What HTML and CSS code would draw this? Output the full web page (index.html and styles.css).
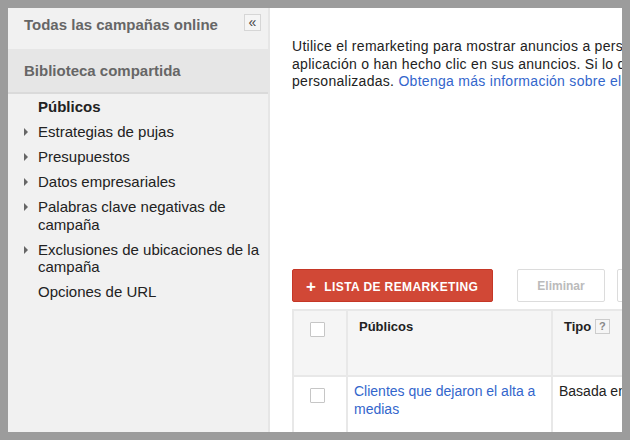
FILE: index.html
```html
<!DOCTYPE html>
<html lang="es">
<head>
    <meta charset="UTF-8" />
    <title>Biblioteca compartida - Públicos</title>
    <link rel="stylesheet" href="styles.css">
</head>
<body>
    <div class="frame">
        <div class="sidebar">
            <div class="side-top">
                <span class="side-title">Todas las campañas online</span>
                <button class="collapse-btn">&laquo;</button>
            </div>
            <div class="side-section">Biblioteca compartida</div>
            <ul class="side-list">
                <li class="active">Públicos</li>
                <li class="expand">Estrategias de pujas</li>
                <li class="expand">Presupuestos</li>
                <li class="expand">Datos empresariales</li>
                <li class="expand">Palabras clave negativas de campaña</li>
                <li class="expand">Exclusiones de ubicaciones de la campaña</li>
                <li>Opciones de URL</li>
            </ul>
        </div>

        <div class="main">
            <p class="intro">Utilice el remarketing para mostrar anuncios a personas que han visitado su sitio web o su<br>
                aplicación o han hecho clic en sus anuncios. Si lo desea, también puede usar listas de audiencias<br>
                personalizadas. <a href="#">Obtenga más información sobre el remarketing</a></p>

            <div class="toolbar">
                <button class="btn-red"><span class="plus">+</span>LISTA DE REMARKETING</button>
                <span class="divider"></span>
                <button class="btn-plain" disabled>Eliminar</button>
                <button class="btn-plain">Más</button>
            </div>

            <table class="grid">
                <thead>
                    <tr>
                        <th class="col-check"><span class="checkbox"></span></th>
                        <th class="col-name">Públicos</th>
                        <th class="col-type">Tipo <span class="help">?</span></th>
                    </tr>
                </thead>
                <tbody>
                    <tr>
                        <td class="col-check"><span class="checkbox"></span></td>
                        <td class="col-name"><a href="#">Clientes que dejaron el alta a medias</a></td>
                        <td class="col-type">Basada en reglas</td>
                    </tr>
                </tbody>
            </table>
        </div>
    </div>
</body>
</html>
```

FILE: styles.css
```css
* {
    box-sizing: border-box;
}

body {
    margin: 0;
    background: #9c9c9c;
    font-family: "Liberation Sans", Arial, sans-serif;
    color: #222;
}

.frame {
    margin: 8px;
    width: 614px;
    height: 424px;
    background: #fff;
    display: flex;
    overflow: hidden;
}

.sidebar {
    width: 262px;
    flex-shrink: 0;
    background: #f1f1f1;
    border-right: 2px solid #e6e6e6;
}

.side-top {
    height: 41px;
    display: flex;
    align-items: center;
    justify-content: space-between;
    padding: 0 7px 0 16px;
}

.side-title {
    font-size: 15px;
    font-weight: bold;
    color: #666;
    margin-top: -8px;
}

.collapse-btn {
    width: 17px;
    height: 17px;
    padding: 0;
    margin-top: -13px;
    border: 1px solid #d6d6d6;
    background: #f5f5f5;
    color: #444;
    font-size: 14px;
    line-height: 13px;
    font-family: "Liberation Sans", Arial, sans-serif;
}

.side-section {
    height: 45px;
    background: #e6e6e6;
    border-bottom: 2px solid #dadada;
    padding-left: 16px;
    display: flex;
    align-items: center;
    font-size: 15px;
    font-weight: bold;
    color: #666;
}

.side-list {
    list-style: none;
    margin: 0;
    padding: 4px 4px 0 30px;
    font-size: 15px;
    line-height: 17.5px;
}

.side-list li {
    position: relative;
    margin-bottom: 7.5px;
}

.side-list li.active {
    font-weight: bold;
}

.side-list li.expand::before {
    content: "";
    position: absolute;
    left: -14px;
    top: 5px;
    border-left: 4px solid #666;
    border-top: 4px solid transparent;
    border-bottom: 4px solid transparent;
}

.main {
    flex: 1;
    padding: 30px 0 0 22px;
    min-width: 0;
}

.intro {
    margin: 0;
    white-space: nowrap;
    font-size: 14px;
    letter-spacing: 0.28px;
    line-height: 17.5px;
    height: 231px;
}

.intro a,
.grid a {
    color: #3366cc;
    text-decoration: none;
}

.toolbar {
    display: flex;
    align-items: center;
    gap: 12px;
    height: 33px;
    white-space: nowrap;
}

.btn-red {
    height: 33px;
    width: 201px;
    background: #d14836;
    border: 1px solid #c53727;
    border-radius: 2px;
    color: #fff;
    font-family: "Liberation Sans", Arial, sans-serif;
    font-size: 12px;
    letter-spacing: 0.4px;
    font-weight: bold;
    padding: 0 0 0 13px;
    text-align: left;
    flex-shrink: 0;
}

.plus {
    font-size: 17px;
    margin-right: 8px;
    position: relative;
    top: 1px;
}

.divider {
    width: 1px;
    height: 32px;
    background: #ddd;
}

.btn-plain {
    height: 33px;
    width: 88px;
    background: #fff;
    border: 1px solid #dcdcdc;
    border-radius: 2px;
    color: #bbb;
    font-family: "Liberation Sans", Arial, sans-serif;
    font-size: 12px;
    font-weight: bold;
    flex-shrink: 0;
}

.grid {
    margin-top: 7px;
    border-collapse: collapse;
    width: 560px;
    font-size: 14px;
}

.grid th,
.grid td {
    border: 2px solid #e8e8e8;
    text-align: left;
    vertical-align: top;
}

.grid thead tr {
    background: #f5f5f5;
    height: 66px;
}

.grid th {
    font-size: 13px;
    font-weight: bold;
    padding: 8px 10px 0 11px;
}

.grid td {
    padding: 6px 8px 0 6px;
    line-height: 17.5px;
    height: 60px;
}

.col-check {
    width: 54px;
}

.grid .col-check {
    padding: 11px 0 0 16px;
}

.col-name {
    width: 205px;
}

.checkbox {
    display: block;
    width: 15px;
    height: 15px;
    border: 1px solid #c6c6c6;
    background: #fff;
    border-radius: 1px;
}

.help {
    display: inline-block;
    width: 15px;
    height: 15px;
    border: 1px solid #ccc;
    background: #f5f5f5;
    color: #888;
    font-size: 11px;
    line-height: 13px;
    text-align: center;
    font-weight: bold;
    vertical-align: 1px;
}
```
